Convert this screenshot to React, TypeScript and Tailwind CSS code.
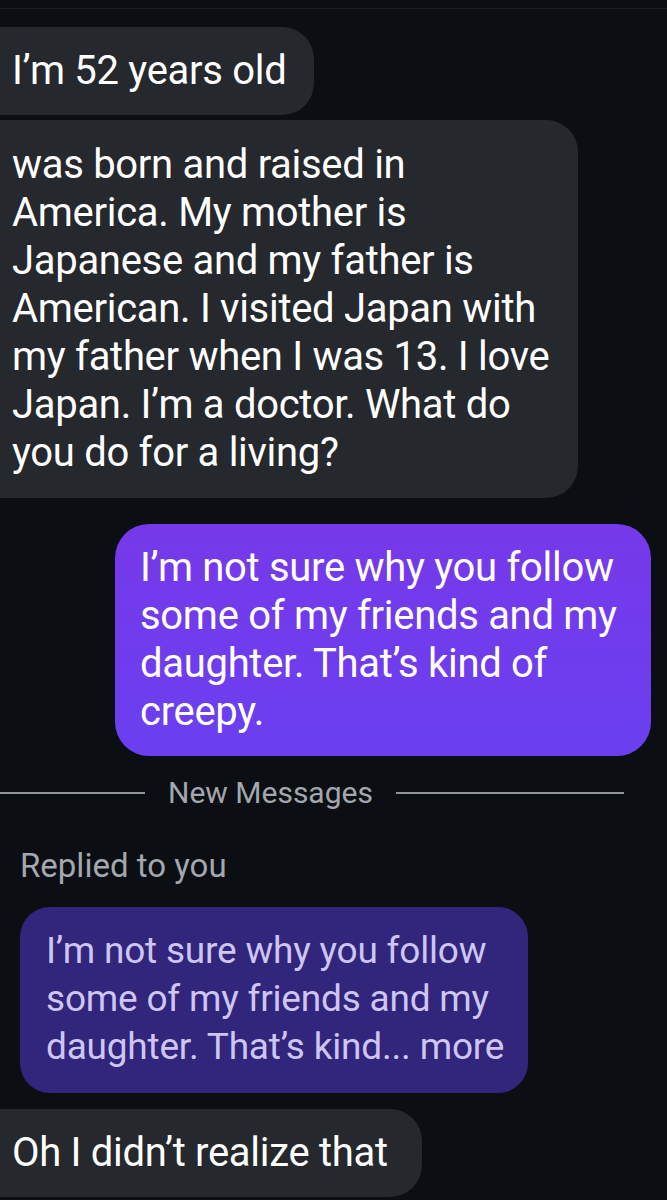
const theirs = [
  "was born and raised in",
  "America. My mother is",
  "Japanese and my father is",
  "American. I visited Japan with",
  "my father when I was 13. I love",
  "Japan. I’m a doctor. What do",
  "you do for a living?",
];

const mine = [
  "I’m not sure why you follow",
  "some of my friends and my",
  "daughter. That’s kind of",
  "creepy.",
];

const quoted = [
  "I’m not sure why you follow",
  "some of my friends and my",
  "daughter. That’s kind... more",
];

const Lines = ({ lines }: { lines: string[] }) => (
  <>
    {lines.map((l, i) => (
      <div key={i} className="whitespace-nowrap">
        {l}
      </div>
    ))}
  </>
);

export default function App() {
  return (
    <div className="w-[667px] h-[1200px] overflow-hidden bg-[#0b0e13] font-['Roboto',sans-serif] text-white">
      <div className="h-[9px] border-b border-[#1d2127]" />

      {/* incoming */}
      <div className="flex flex-col items-start mt-[18px]">
        <div className="-ml-[30px] pl-[42px] pr-[28px] py-[20px] rounded-[32px] bg-[#25282d] text-[40px] leading-[48px] tracking-[-0.3px]">
          I’m 52 years old
        </div>
        <div className="mt-[5px] -ml-[30px] w-[608px] pl-[42px] pr-[20px] pt-[21px] pb-[21px] rounded-[32px] bg-[#25282d] text-[40px] leading-[48px] tracking-[-0.3px]">
          <Lines lines={theirs} />
        </div>
      </div>

      {/* outgoing */}
      <div className="flex justify-end pr-[16px] mt-[26px]">
        <div className="w-[536px] pl-[25px] pr-[20px] pt-[20px] pb-[20px] rounded-[34px] bg-gradient-to-b from-[#7639e9] to-[#6a3ff0] text-[40px] leading-[48px] tracking-[-0.3px]">
          <Lines lines={mine} />
        </div>
      </div>

      {/* divider */}
      <div className="flex items-center mt-[21px] h-[32px]">
        <div className="w-[145px] h-[2px] bg-[#8f939b]" />
        <div className="px-[23px] text-[30px] leading-[32px] text-[#a3a7ae] whitespace-nowrap">
          New Messages
        </div>
        <div className="w-[228px] h-[2px] bg-[#8f939b]" />
      </div>

      <div className="mt-[39px] pl-[20px] text-[33px] leading-[36px] text-[#a3a7ae]">
        Replied to you
      </div>

      <div className="flex mt-[23px] pl-[20px]">
        <div className="w-[508px] pl-[26px] pr-[18px] pt-[20px] pb-[22px] rounded-[30px] bg-[#32257c] text-[37px] leading-[48px] text-[#cdc6f2] tracking-[-0.2px]">
          <Lines lines={quoted} />
        </div>
      </div>

      <div className="flex mt-[16px]">
        <div className="-ml-[30px] pl-[42px] pr-[34px] py-[20px] rounded-[32px] bg-[#25282d] text-[40px] leading-[48px] tracking-[-0.3px] whitespace-nowrap">
          Oh I didn’t realize that
        </div>
      </div>
    </div>
  );
}
